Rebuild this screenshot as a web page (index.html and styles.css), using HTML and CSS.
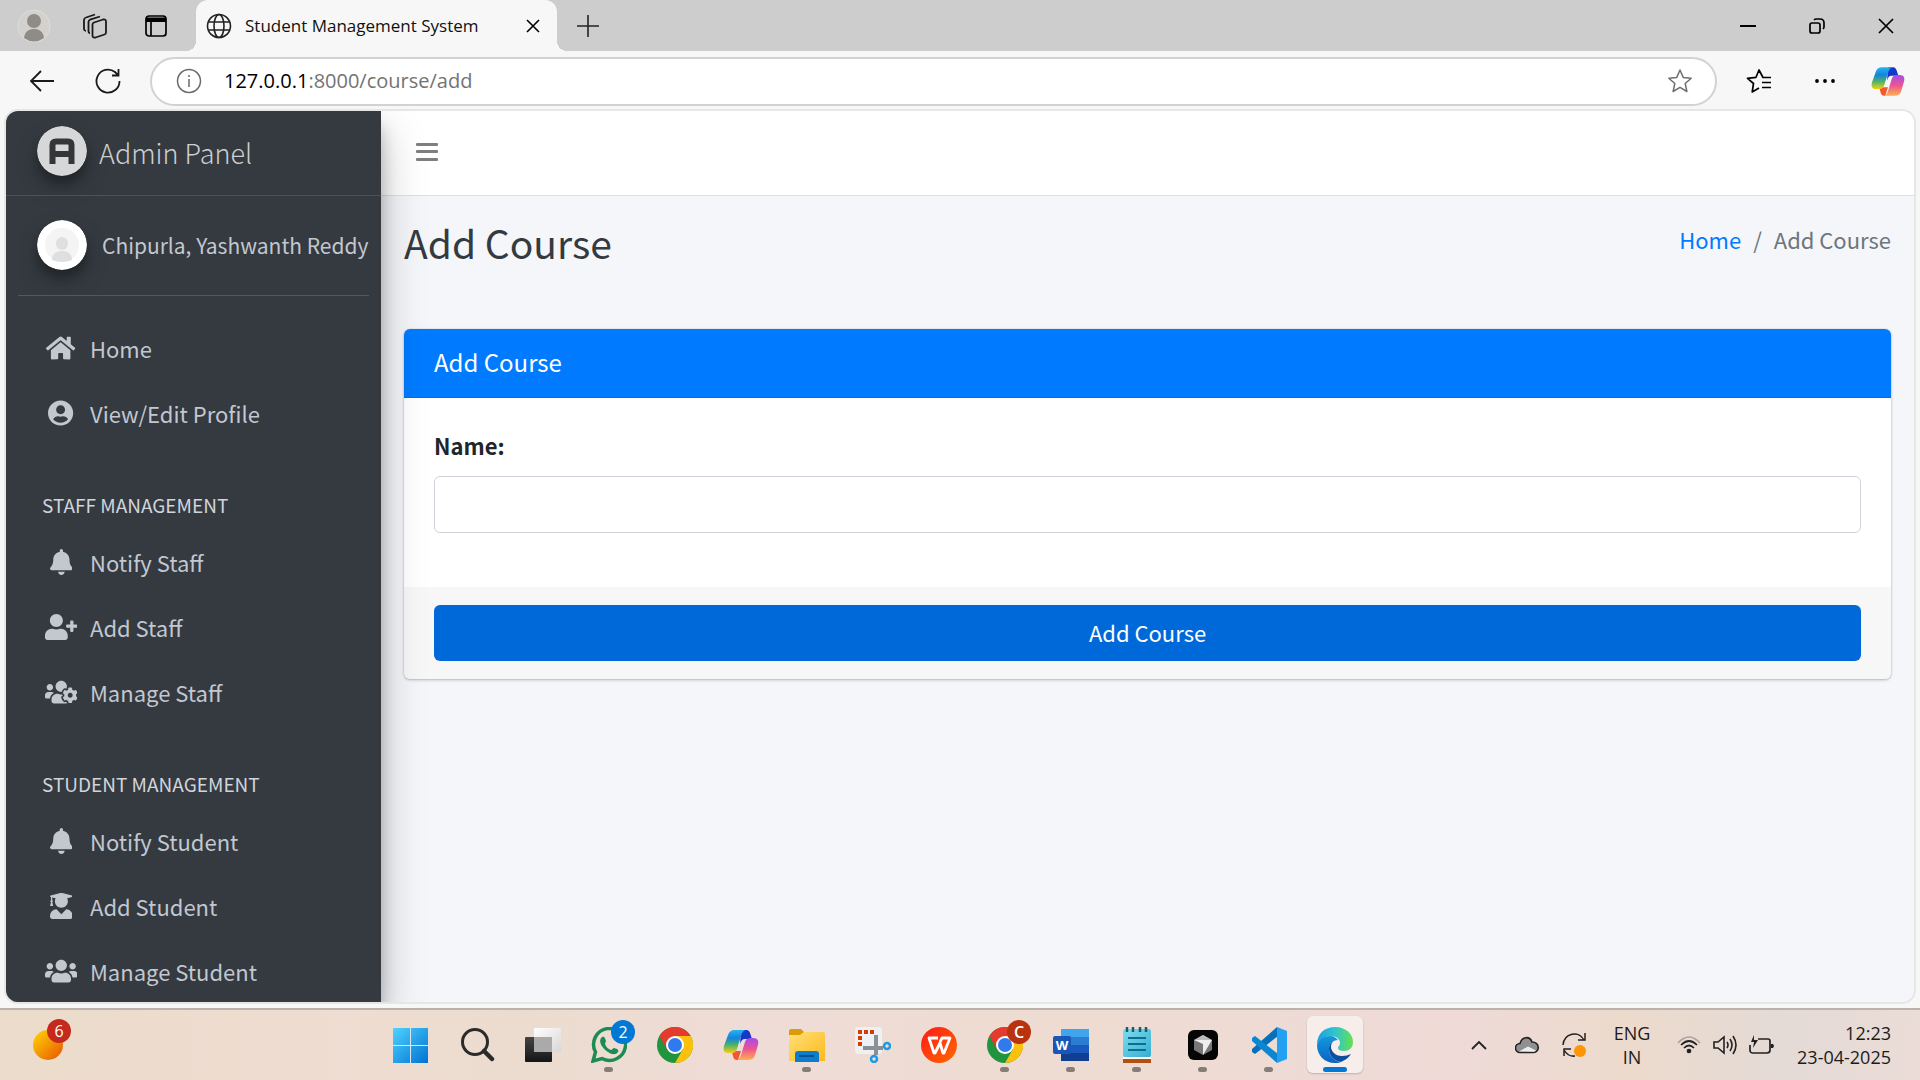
FILE: index.html
```html
<!DOCTYPE html>
<html lang="en">
<head>
<meta charset="utf-8">
<meta name="viewport" content="width=device-width, initial-scale=1">
<title>Student Management System</title>
<link rel="stylesheet" href="styles.css">
</head>
<body>
<svg class="defs" width="0" height="0" aria-hidden="true">
  <defs>
    <linearGradient id="cp-a" x1="0" y1="0" x2="0" y2="1"><stop offset="0" stop-color="#22b4f2"/><stop offset=".35" stop-color="#1583dc"/><stop offset=".65" stop-color="#4cb26a"/><stop offset="1" stop-color="#f7cf12"/></linearGradient>
    <linearGradient id="cp-b" x1="0" y1="0" x2="0" y2="1"><stop offset="0" stop-color="#a24bf0"/><stop offset=".5" stop-color="#ee5490"/><stop offset="1" stop-color="#fdb04d"/></linearGradient>
    <linearGradient id="win" x1="0" y1="0" x2="1" y2="1"><stop offset="0" stop-color="#4fd3ff"/><stop offset="1" stop-color="#0072d2"/></linearGradient>
    <linearGradient id="sun" x1="0" y1="0" x2="1" y2="1"><stop offset=".1" stop-color="#ffcb00"/><stop offset="1" stop-color="#e65300"/></linearGradient>
    <linearGradient id="tvd" x1="0" y1="0" x2="0" y2="1"><stop offset="0" stop-color="#454545"/><stop offset="1" stop-color="#151515"/></linearGradient>
    <linearGradient id="tvl" x1="0" y1="0" x2="1" y2="1"><stop offset="0" stop-color="#fff"/><stop offset="1" stop-color="#d9d6d6"/></linearGradient>
    <linearGradient id="fold" x1="0" y1="0" x2="1" y2="1"><stop offset="0" stop-color="#ffe07a"/><stop offset="1" stop-color="#fcb91b"/></linearGradient>
    <linearGradient id="wps" x1="0" y1="0" x2="1" y2="1"><stop offset="0" stop-color="#ff1818"/><stop offset="1" stop-color="#ff6a00"/></linearGradient>
    <linearGradient id="note" x1="0" y1="0" x2="1" y2="1"><stop offset="0" stop-color="#7fdcf0"/><stop offset="1" stop-color="#35aed0"/></linearGradient>
    <linearGradient id="edge-t" x1="0" y1="0" x2="1" y2="0"><stop offset="0" stop-color="#1f9fe0"/><stop offset=".5" stop-color="#2fc4cf"/><stop offset="1" stop-color="#66e04e"/></linearGradient>
    <linearGradient id="edge-b" x1="0" y1="0" x2="0" y2="1"><stop offset="0" stop-color="#1399dd"/><stop offset="1" stop-color="#0a63c4"/></linearGradient>
    <symbol id="copilot" viewBox="0 0 36 32">
      <path fill="#1638c8" d="M18 1h5c3 0 4 2 5 6l1 3h-7c-3 0-4 2-5 5z"/>
      <path fill="#f4582e" d="M9 22h9l-3 9h-1c-3 0-4-2-5-9z"/>
      <path fill="url(#cp-a)" d="M12 1h10c-2 1-3 3-4 6l-4 13c-1 3-3 4-5 4H5c-4 0-5-3-4-7L5 6c1-3 3-5 7-5z"/>
      <path fill="url(#cp-b)" d="M27 9h3c5 0 6 3 5 7l-3 10c-1 4-4 5-7 5H14c2-1 3-2 4-5l4-13c1-3 3-4 5-4z"/>
    </symbol>
    <symbol id="chrome" viewBox="0 0 36 36">
      <circle cx="18" cy="18" r="18" fill="#20943f"/>
      <path fill="#e33b2e" d="M2.400 9A18 18 0 0 1 33.600 9H18L10.200 22.500z"/>
      <path fill="#fdc10d" d="M33.600 9A18 18 0 0 1 18 36L25.800 22.500 18 9z"/>
      <circle cx="18" cy="18" r="9" fill="#fff"/><circle cx="18" cy="18" r="7" fill="#2f7bee"/>
    </symbol>
    <symbol id="bell" viewBox="0 0 448 512"><path d="M224 512c35.320 0 63.970-28.650 63.970-64H160.030c0 35.350 28.650 64 63.970 64zm215.390-149.710c-19.320-20.760-55.470-51.990-55.470-154.290 0-77.700-54.480-139.900-127.940-155.160V32c0-17.670-14.320-32-31.980-32s-31.980 14.330-31.980 32v20.840C118.560 68.100 64.080 130.300 64.080 208c0 102.300-36.150 133.530-55.470 154.290-6 6.450-8.660 14.160-8.610 21.710.11 16.400 12.980 32 32.100 32h383.800c19.120 0 32-15.600 32.100-32 .05-7.550-2.610-15.270-8.610-21.710z"/></symbol>
  </defs>
</svg>

<header class="tabs">
  <button class="tab-tool" aria-label="Profile"><svg width="34" height="34" viewBox="0 0 34 34"><circle cx="17" cy="17" r="16" fill="#d3d1ce" stroke="#dedddb"/><circle cx="17" cy="12" r="7" fill="#8f8b87"/><path d="M7 29c1-7 5-9 10-9s9 2 10 9q-10 7-20 0z" fill="#8f8b87"/></svg></button>
  <button class="tab-tool" aria-label="Workspaces"><svg width="26" height="26" viewBox="0 0 26 26" fill="none" stroke="#1a1a1a" stroke-width="1.800"><path d="M10.500 11.500q0-1.500 1.500-2l9-3q3-.7 3 2v11q0 1.500-1.500 2l-9 3q-3 .7-3-2z"/><path d="M8 20q-1.500 0-1.500-2V9q0-1.500 1.500-2.300L18 3.500M4 18q-2-.5-2-2V7q0-2 2-2.500L13 1.500"/></svg></button>
  <button class="tab-tool" aria-label="Tab actions"><svg width="24" height="24" viewBox="0 0 24 24" fill="none" stroke="#000" stroke-width="1.700"><rect x="2" y="2" width="20" height="20" rx="3"/><path d="M2 5h20M2 6.500h20" stroke-width="3"/><path d="M7 8v14"/></svg></button>
  <div class="tab">
    <svg width="26" height="26" viewBox="0 0 26 26" fill="none" stroke="#222" stroke-width="1.600"><circle cx="13" cy="13" r="11.500"/><ellipse cx="13" cy="13" rx="5" ry="11.500"/><path d="M2.500 9h21M2.500 17h21"/></svg>
    <span class="tab-title">Student Management System</span>
    <button class="tab-close" aria-label="Close tab"><svg width="14" height="14" viewBox="0 0 14 14" fill="none" stroke="#000" stroke-width="1.600"><path d="M1 1l12 12M13 1L1 13"/></svg></button>
  </div>
  <button class="new-tab" aria-label="New tab"><svg width="22" height="22" viewBox="0 0 22 22" fill="none" stroke="#222" stroke-width="1.600"><path d="M11 0v22M0 11h22"/></svg></button>
  <div class="window-buttons">
    <button aria-label="Minimize"><svg width="16" height="16" viewBox="0 0 16 16" stroke="#000" stroke-width="2"><path d="M0 8h16"/></svg></button>
    <button aria-label="Restore"><svg width="16" height="16" viewBox="0 0 16 16" fill="none" stroke="#000" stroke-width="1.700"><rect x="1" y="5" width="10" height="10" rx="2"/><path d="M5 2q1-1 2-1h4q4 0 4 4v4q0 1-1 2"/></svg></button>
    <button aria-label="Close"><svg width="16" height="16" viewBox="0 0 16 16" fill="none" stroke="#000" stroke-width="1.700"><path d="M1 1l14 14M15 1L1 15"/></svg></button>
  </div>
</header>

<div class="toolbar">
  <button class="nav-btn" aria-label="Back"><svg width="26" height="24" viewBox="0 0 26 24" fill="none" stroke="#1a1a1a" stroke-width="1.800"><path d="M25 12H2M12 2L2 12l10 10"/></svg></button>
  <button class="nav-btn" aria-label="Refresh"><svg width="26" height="26" viewBox="0 0 26 26" fill="none" stroke="#1a1a1a" stroke-width="1.800"><path d="M24.500 13A11.500 11.500 0 1 1 20 4l3 3M23.500 1v6.500H17"/></svg></button>
  <div class="address">
    <svg width="26" height="26" viewBox="0 0 26 26" fill="none" stroke="#6a6a6a" stroke-width="1.500"><circle cx="13" cy="13" r="11.500"/><path d="M13 11v8M13 7v2"/></svg>
    <p class="url"><b>127.0.0.1</b>:8000/course/add</p>
    <button aria-label="Favourite"><svg width="26" height="26" viewBox="0 0 26 26" fill="none" stroke="#6f6f6f" stroke-width="1.500" stroke-linejoin="round"><path d="M13 2l3.200 7.400 8 .8-6 5.300 1.700 8L13 19.300 6.100 23.500l1.700-8-6-5.300 8-.8z"/></svg></button>
  </div>
  <button class="tool" aria-label="Favourites"><svg width="26" height="26" viewBox="0 0 26 26" fill="none" stroke="#000" stroke-width="1.700" stroke-linejoin="round"><path d="M25 9.500h-8L13 2 10 9.300l-8.500 1 6 5.200-1.300 8.500L13 20M16 14.500h9M16 19.500h9"/></svg></button>
  <button class="tool" aria-label="Settings and more"><svg width="22" height="6" viewBox="0 0 22 6"><circle cx="3" cy="3" r="1.900"/><circle cx="11" cy="3" r="1.900"/><circle cx="19" cy="3" r="1.900"/></svg></button>
  <button class="tool copilot" aria-label="Copilot"><svg width="34" height="31"><use href="#copilot"/></svg></button>
</div>

<div class="page">
  <aside class="sidebar">
    <a class="brand" href="#">
      <svg class="disc" width="50" height="50" viewBox="0 0 50 50"><circle cx="25" cy="25" r="25" fill="#d6d7d8"/><path d="M15.500 38V19q0-3.500 3.500-3.500h12q3.500 0 3.500 3.500v19M15.500 28h19" fill="none" stroke="#343637" stroke-width="6"/></svg>
      <span>Admin Panel</span>
    </a>
    <div class="side-scroll">
      <div class="user">
        <svg class="disc" width="50" height="50" viewBox="0 0 50 50"><circle cx="25" cy="25" r="25" fill="#fff"/><circle cx="25" cy="25" r="17" fill="#f4f4f4"/><rect x="19" y="17" width="12" height="13" rx="6" fill="#dedfe0"/><path d="M15 40c0-6 4-9 10-9s10 3 10 9q-10 4-20 0z" fill="#dedfe0"/></svg>
        <a href="#">Chipurla, Yashwanth Reddy</a>
      </div>
      <nav>
        <a class="item" href="#"><span class="ico"><svg viewBox="0 0 576 512"><path d="M280.370 148.260L96 300.110V464a16 16 0 0 0 16 16l112.060-.29a16 16 0 0 0 15.920-16V368a16 16 0 0 1 16-16h64a16 16 0 0 1 16 16v95.640a16 16 0 0 0 16 16.050L464 480a16 16 0 0 0 16-16V300L295.670 148.260a12.190 12.190 0 0 0-15.300 0zM571.600 251.470L488 182.560V44.050a12 12 0 0 0-12-12h-56a12 12 0 0 0-12 12v72.610L318.470 43a48 48 0 0 0-61 0L4.340 251.470a12 12 0 0 0-1.600 16.900l25.500 31A12 12 0 0 0 45.150 301l235.220-193.740a12.190 12.190 0 0 1 15.300 0L530.900 301a12 12 0 0 0 16.900-1.600l25.500-31a12 12 0 0 0-1.700-16.930z"/></svg></span>Home</a>
        <a class="item" href="#"><span class="ico"><svg viewBox="0 0 496 512"><path d="M248 8C111 8 0 119 0 256s111 248 248 248 248-111 248-248S385 8 248 8zm0 96c48.600 0 88 39.400 88 88s-39.400 88-88 88-88-39.400-88-88 39.400-88 88-88zm0 344c-58.700 0-111.300-26.600-146.500-68.200 18.800-35.400 55.600-59.800 98.500-59.800 2.400 0 4.800.4 7.100 1.100 13 4.200 26.600 6.900 40.900 6.900 14.300 0 28-2.700 40.900-6.900 2.300-.7 4.700-1.100 7.100-1.100 42.900 0 79.700 24.400 98.500 59.800C359.300 421.400 306.700 448 248 448z"/></svg></span>View/Edit Profile</a>
        <h2>STAFF MANAGEMENT</h2>
        <a class="item" href="#"><span class="ico"><svg viewBox="0 0 448 512"><use href="#bell"/></svg></span>Notify Staff</a>
        <a class="item" href="#"><span class="ico"><svg viewBox="0 0 640 512"><path d="M624 208h-64v-64c0-8.800-7.200-16-16-16h-32c-8.800 0-16 7.200-16 16v64h-64c-8.800 0-16 7.200-16 16v32c0 8.800 7.200 16 16 16h64v64c0 8.800 7.200 16 16 16h32c8.800 0 16-7.200 16-16v-64h64c8.800 0 16-7.200 16-16v-32c0-8.800-7.200-16-16-16zm-400 48c70.700 0 128-57.300 128-128S294.700 0 224 0 96 57.300 96 128s57.300 128 128 128zm89.600 32h-16.700c-22.200 10.200-46.900 16-72.900 16s-50.600-5.800-72.900-16h-16.700C60.200 288 0 348.200 0 422.400V464c0 26.500 21.500 48 48 48h352c26.500 0 48-21.500 48-48v-41.600c0-74.200-60.200-134.400-134.400-134.400z"/></svg></span>Add Staff</a>
        <a class="item" href="#"><span class="ico"><svg viewBox="0 0 640 512"><path d="M610.500 341.300c2.600-14.100 2.600-28.500 0-42.600l25.800-14.900c3-1.700 4.300-5.200 3.300-8.500-6.700-21.600-18.200-41.200-33.200-57.400-2.300-2.500-6-3.100-9-1.400l-25.800 14.900c-10.900-9.300-23.400-16.500-36.900-21.300v-29.800c0-3.400-2.400-6.400-5.700-7.100-22.300-5-45-4.800-66.200 0-3.300.7-5.700 3.700-5.700 7.100v29.800c-13.500 4.800-26 12-36.900 21.300l-25.800-14.900c-2.900-1.700-6.700-1.100-9 1.400-15 16.200-26.500 35.800-33.200 57.400-1 3.300.4 6.800 3.300 8.500l25.800 14.900c-2.600 14.100-2.600 28.500 0 42.600l-25.800 14.900c-3 1.700-4.300 5.200-3.300 8.500 6.700 21.600 18.200 41.100 33.200 57.400 2.300 2.500 6 3.100 9 1.400l25.800-14.900c10.900 9.300 23.400 16.500 36.900 21.300v29.800c0 3.400 2.400 6.400 5.700 7.100 22.300 5 45 4.800 66.200 0 3.300-.7 5.700-3.700 5.700-7.100v-29.800c13.500-4.800 26-12 36.900-21.300l25.800 14.900c2.900 1.700 6.700 1.100 9-1.400 15-16.200 26.500-35.800 33.200-57.400 1-3.300-.4-6.800-3.300-8.500l-25.800-14.900zM496 368.500c-26.800 0-48.500-21.800-48.500-48.500s21.800-48.500 48.500-48.500 48.500 21.800 48.500 48.500-21.700 48.500-48.500 48.500zM96 224c35.300 0 64-28.700 64-64s-28.700-64-64-64-64 28.700-64 64 28.700 64 64 64zm224 32c1.900 0 3.700-.5 5.600-.6 8.300-21.700 20.500-42.100 36.300-59.200 7.400-8 17.900-12.600 28.900-12.600 6.900 0 13.700 1.800 19.600 5.300l7.900 4.600c.8-.5 1.600-.9 2.400-1.400 7-14.600 11.200-30.800 11.200-48 0-61.900-50.100-112-112-112S208 82.100 208 144c0 61.900 50.100 112 112 112zm105.200 194.500c-2.300-1.200-4.600-2.600-6.800-3.900-8.200 4.800-15.300 9.800-27.500 9.800-10.900 0-21.400-4.600-28.900-12.600-18.300-19.800-32.300-43.900-40.200-69.600-10.700-34.500 24.900-49.700 25.800-50.300-.1-2.600-.1-5.200 0-7.800l-7.900-4.600c-3.800-2.200-7-5-9.800-8.100-3.300.2-6.500.6-9.800.6-24.600 0-47.600-6-68.500-16h-8.300C179.600 288 128 339.600 128 403.200V432c0 26.500 21.500 48 48 48h255.400c-3.700-6-6.200-12.800-6.200-20.300v-9.200zM173.100 274.600C161.500 263.100 145.600 256 128 256H64c-35.300 0-64 28.700-64 64v32c0 17.700 14.300 32 32 32h65.900c6.300-47.400 34.900-87.300 75.200-109.400z"/></svg></span>Manage Staff</a>
        <h2>STUDENT MANAGEMENT</h2>
        <a class="item" href="#"><span class="ico"><svg viewBox="0 0 448 512"><use href="#bell"/></svg></span>Notify Student</a>
        <a class="item" href="#"><span class="ico"><svg viewBox="0 0 448 512"><path d="M319.400 320.600L224 416l-95.400-95.400C57.100 323.700 0 382.200 0 454.400v9.600c0 26.500 21.500 48 48 48h352c26.500 0 48-21.500 48-48v-9.600c0-72.200-57.100-130.700-128.600-133.800zM13.600 79.800l6.400 1.500v58.400c-7 4.200-12 11.500-12 20.300 0 8.400 4.600 15.400 11.100 19.700L3.500 242c-1.700 6.900 2.100 14 7.600 14h41.800c5.500 0 9.300-7.100 7.600-14l-15.600-62.300C51.400 175.400 56 168.400 56 160c0-8.800-5-16.100-12-20.300V87.100l66 15.900c-8.600 17.200-14 36.400-14 57 0 70.700 57.300 128 128 128s128-57.300 128-128c0-20.600-5.300-39.800-14-57l96.300-23.200c18.200-4.400 18.200-27.100 0-31.500l-190.400-46c-13-3.100-26.700-3.100-39.700 0L13.600 48.200c-18.100 4.400-18.100 27.200 0 31.600z"/></svg></span>Add Student</a>
        <a class="item" href="#"><span class="ico"><svg viewBox="0 0 640 512"><path d="M96 224c35.300 0 64-28.700 64-64s-28.700-64-64-64-64 28.700-64 64 28.700 64 64 64zm448 0c35.300 0 64-28.700 64-64s-28.700-64-64-64-64 28.700-64 64 28.700 64 64 64zm32 32h-64c-17.600 0-33.500 7.100-45.100 18.600 40.300 22.100 68.900 62 75.100 109.400h66c17.700 0 32-14.300 32-32v-32c0-35.300-28.700-64-64-64zm-256 0c61.900 0 112-50.100 112-112S381.900 32 320 32 208 82.100 208 144s50.100 112 112 112zm76.800 32h-8.300c-20.800 10-43.900 16-68.500 16s-47.600-6-68.500-16h-8.300C179.600 288 128 339.600 128 403.200V432c0 26.500 21.500 48 48 48h288c26.500 0 48-21.500 48-48v-28.800c0-63.600-51.600-115.200-115.200-115.200zm-223.700-13.400C161.500 263.100 145.600 256 128 256H64c-35.300 0-64 28.700-64 64v32c0 17.700 14.300 32 32 32h65.900c6.300-47.400 34.900-87.300 75.200-109.400z"/></svg></span>Manage Student</a>
      </nav>
    </div>
  </aside>

  <main class="main">
    <div class="navbar">
      <button aria-label="Toggle menu"><svg width="22" height="20" viewBox="0 0 22 20" fill="#7f7f7f"><rect y="1" width="22" height="3" rx="1"/><rect y="8" width="22" height="3" rx="1"/><rect y="16" width="22" height="3" rx="1"/></svg></button>
    </div>
    <div class="content">
      <div class="content-head">
        <h1>Add Course</h1>
        <ol class="crumbs"><li><a href="#">Home</a></li><li>Add Course</li></ol>
      </div>
      <form class="card">
        <h3 class="card-head">Add Course</h3>
        <div class="card-body">
          <label for="name">Name:</label>
          <input id="name" type="text">
        </div>
        <div class="card-foot"><button type="button">Add Course</button></div>
      </form>
    </div>
  </main>
</div>

<footer class="taskbar">
  <div class="widget">
    <div class="app-icon"><svg width="30" height="30"><circle cx="15" cy="15" r="15" fill="url(#sun)"/></svg><span class="badge red">6</span></div>
  </div>
  <div class="apps">
    <button class="app" aria-label="Start"><svg width="36" height="36" viewBox="0 0 36 36" fill="url(#win)"><path d="M0 1h17v17H0zM18 1h17v17H18zM0 19h17v17H0zM18 19h17v17H18z"/><path d="M17.500 1v35M0 18.500h35" stroke="#d7e8f4"/></svg></button>
    <button class="app" aria-label="Search"><svg width="36" height="36" viewBox="0 0 36 36" fill="none" stroke="#2b2b2b"><circle cx="16" cy="15" r="12.500" stroke-width="3"/><path d="M25 24l8 8" stroke-width="4.500" stroke-linecap="round"/></svg></button>
    <button class="app" aria-label="Task view"><svg width="36" height="36" viewBox="0 0 36 36"><rect x="0" y="10" width="27" height="25" rx="1" fill="url(#tvd)"/><rect x="9" y="1" width="27" height="24" rx="1" fill="url(#tvl)"/><path d="M9 10h18v15H9z" fill="#aaa"/></svg></button>
    <button class="app run" aria-label="WhatsApp"><span class="app-icon"><svg width="36" height="36" viewBox="0 0 36 36"><path d="M2 34l2.500-9A16 16 0 1 1 11 31.500z" fill="none" stroke="#1c8c54" stroke-width="3.500"/><path d="M11 10c2-1 3 0 4 4 0 1-1 2-1 3 1 3 3 5 6 6 1 0 2-2 3-2 4 1 5 2 4 4-2 3-6 3-10 0-5-3-11-11-6-15z" fill="#1c8c54"/></svg><span class="badge blue">2</span></span></button>
    <button class="app" aria-label="Chrome"><svg width="36" height="36"><use href="#chrome"/></svg></button>
    <button class="app" aria-label="Copilot"><svg width="36" height="34"><use href="#copilot"/></svg></button>
    <button class="app run" aria-label="File Explorer"><svg width="36" height="36" viewBox="0 0 36 36"><path d="M0 4q0-2 2-2h10l4 4v4H0z" fill="#dc9b0b"/><path d="M0 8h11l4-3h19q2 0 2 2v27H0z" fill="url(#fold)"/><path d="M6 35V27q0-3 3-3h18q3 0 3 3v8z" fill="#0c7ccc"/><path d="M10 29h15" stroke="#084f91" stroke-width="2"/></svg></button>
    <button class="app" aria-label="Snipping Tool"><svg width="36" height="36" viewBox="0 0 36 36"><rect x="0" y="0" width="27" height="27" rx="3" fill="#eef1f4"/><path d="M5 19V5h15" fill="none" stroke="#d83b01" stroke-width="4" stroke-dasharray="4 2"/><path d="M21 8v20M8 21h20" stroke="#8b8f96" stroke-width="4"/><g fill="none" stroke="#1a9be6" stroke-width="2.500"><circle cx="19" cy="32" r="3"/><circle cx="32" cy="19" r="3"/></g></svg></button>
    <button class="app" aria-label="WPS Office"><svg width="36" height="36" viewBox="0 0 36 36"><circle cx="18" cy="18" r="18" fill="url(#wps)"/><path d="M17 11H8l5 15h1l5-10 3 10h1l6-15h-8l-2 4" fill="none" stroke="#fff" stroke-width="2.800" stroke-linejoin="round"/></svg></button>
    <button class="app run" aria-label="Chrome profile"><span class="app-icon"><svg width="36" height="36"><use href="#chrome"/></svg><span class="badge rust">C</span></span></button>
    <button class="app run" aria-label="Word"><span class="app-icon"><svg width="36" height="36" viewBox="0 0 36 36"><path d="M8 2h28v8H8z" fill="#41a5ee"/><path d="M8 10h28v8H8z" fill="#2b7cd3"/><path d="M8 18h28v8H8z" fill="#185abd"/><path d="M8 26h28v8H8z" fill="#103f91"/><rect y="9" width="18" height="18" rx="2" fill="#1857b8"/></svg><span class="word-mark">W</span></span></button>
    <button class="app run" aria-label="Notepad"><svg width="36" height="36" viewBox="0 0 36 36"><path d="M4 32h28v4H4z" fill="#b4500f"/><path d="M4 30h28v2H4z" fill="#fff"/><rect x="4" y="2" width="28" height="28" rx="2" fill="url(#note)"/><path d="M9 11h18M9 17h18M9 23h18" stroke="#0b6f8e" stroke-width="2"/><path d="M8 0v5M14 0v5M21 0v5M27 0v5" stroke="#135e75" stroke-width="2.500"/></svg></button>
    <button class="app run" aria-label="Cursor"><svg width="36" height="36" viewBox="0 0 36 36"><rect x="3" y="3" width="30" height="30" rx="6" fill="#050505"/><path d="M18 8l9 5v10l-9 5-9-5V13z" fill="#777"/><path d="M9 13h18l-9 15v-11z" fill="#eee"/><path d="M18 8l9 5H9z" fill="#bbb"/></svg></button>
    <button class="app run" aria-label="Visual Studio Code"><svg width="36" height="36" viewBox="0 0 36 36"><path d="M26 0L1 22v3l3 2L27 9z" fill="#0870b8"/><path d="M26 36L1 14v-3l3-2 23 18z" fill="#0b86d1"/><path d="M26 0l10 4v28l-10 4z" fill="#22a0f2"/></svg></button>
    <button class="app run active" aria-label="Edge"><svg width="36" height="36" viewBox="0 0 36 36"><path d="M0 18C0 6 8 0 18 0c11 0 18 7 18 15 0 6-4 9-9 9-4 0-6-1-6-3s2-2 2-5c0-4-4-7-9-7C7 9 2 13 0 18z" fill="url(#edge-t)"/><path d="M0 18C2 12 7 9 13 9c4 0 6 2 8 4-5 0-9 4-9 9 0 6 4 12 12 13-2 1-4 1-6 1C7 36 0 28 0 18z" fill="url(#edge-b)"/><path d="M17 14c-4 2-5 5-5 8 0 7 5 12 12 13 5-2 8-5 10-8-3 1-5 2-9 2-7 0-11-5-11-9 0-3 1-5 3-6z" fill="#0d4f9e"/></svg></button>
  </div>
  <div class="tray">
    <svg class="chevron" width="16" height="10" viewBox="0 0 16 10" fill="none" stroke="#222" stroke-width="1.800"><path d="M1 9l7-7 7 7"/></svg>
    <svg class="cloud" width="24" height="18" viewBox="0 0 24 18"><path d="M5 16.500a4.500 4.500 0 0 1 0-9C7 0 15 0 17 6c8 0 8 10.500 1.500 10.500z" fill="#909090" stroke="#222" stroke-width="1.600"/><path d="M4 15.500l9-5 8 4q-1 1.200-2.500 1.200z" fill="#eee"/></svg>
    <svg width="24" height="26" viewBox="0 0 24 26" fill="none" stroke="#222" stroke-width="1.500"><path d="M1 13C2 1 17-2 22 8M23 1v7h-7M2 24v-7h7M2 18q4 7 11 6"/><circle cx="18" cy="19" r="6" fill="#ff9500" stroke="none"/></svg>
    <span class="lang">ENG<br>IN</span>
    <svg width="24" height="18" viewBox="0 0 24 18" fill="none" stroke="#222" stroke-width="1.700"><path d="M1 7Q12-5 23 7" stroke="#aaa2a0"/><path d="M4 9q8-8 16 0M7 12q5-5 10 0"/><circle cx="12" cy="15" r="1.500" fill="#222"/></svg>
    <svg width="24" height="22" viewBox="0 0 24 22" fill="none" stroke="#222" stroke-width="1.600"><path d="M1 8h4l6-5v16l-6-5H1zM14 8q2 3 0 6M17 5q4 6 0 12M20 2q6 9 0 18"/></svg>
    <svg width="25" height="22" viewBox="0 0 25 22" fill="none" stroke="#222" stroke-width="1.700"><path d="M9 5h10q2 0 2 2v9q0 3-3 3H4q-3 0-3-3v-5M22 12h3" /><path d="M5 1L2 8h3l-1 6 5-8H5z" fill="#222" stroke="none"/><path d="M23 10v4" stroke-width="2.500"/></svg>
    <time class="clock">12:23<br>23-04-2025</time>
  </div>
</footer>
</body>
</html>
```
FILE: styles.css
```css
* { box-sizing: border-box; margin: 0; padding: 0; }
body {
  height: 100vh;
  display: flex;
  flex-direction: column;
  background: #f7f7f7;
  font-family: "Noto Sans CJK SC", sans-serif;
  font-size: 22px;
  line-height: 36px;
  color: #212529;
}
button { border: 0; background: none; font: inherit; color: inherit; display: flex; align-items: center; justify-content: center; }
a { color: inherit; text-decoration: none; }
svg { display: block; flex: none; }
.defs { position: absolute; }

/* Browser tab strip */
.tabs { flex: none; height: 51px; display: flex; align-items: center; background: #cdcdcd; padding-left: 3px; font-family: "Open Sans", sans-serif; font-size: 17px; }
.tab-tool { width: 61px; height: 51px; }
.tab { position: relative; width: 361px; height: 51px; margin-left: 10px; padding: 0 17px 0 10px; display: flex; align-items: center; gap: 13px; background: #f7f7f7; border-radius: 12px 12px 0 0; color: #111; }
.tab::before, .tab::after { content: ""; position: absolute; bottom: 0; width: 10px; height: 10px; }
.tab::before { left: -10px; background: radial-gradient(circle at 0 0, transparent 10px, #f7f7f7 10px); }
.tab::after { right: -10px; background: radial-gradient(circle at 100% 0, transparent 10px, #f7f7f7 10px); }
.tab-title { flex: 1; white-space: nowrap; }
.new-tab { margin-left: 20px; }
.window-buttons { margin-left: auto; display: flex; }
.window-buttons button { width: 69px; height: 51px; }

/* Address row */
.toolbar { flex: none; height: 60px; display: flex; align-items: center; padding: 0 2px 0 9px; }
.nav-btn { width: 66px; height: 48px; }
.address { flex: 1; height: 49px; margin: 0 9px; padding: 0 22px 0 24px; display: flex; align-items: center; gap: 22px; background: #fff; border: 2px solid #d2d2d2; border-radius: 25px; font-family: "Open Sans", sans-serif; font-size: 20px; color: #737373; }
.url { flex: 1; }
.url b { font-weight: 400; color: #000; }
.tool { width: 66px; height: 48px; }
.copilot { width: 60px; }

/* Web page */
.page { flex: 1; min-height: 0; display: flex; margin: 0 6px 6px; border-radius: 12px; overflow: hidden; background: #f4f6f9; box-shadow: 0 0 0 2px #e6e6e6; }
.sidebar { width: 375px; flex: none; position: relative; z-index: 1; background: #343a40; color: #c2c7d0; box-shadow: 0 21px 42px rgba(0,0,0,.25), 0 15px 15px rgba(0,0,0,.22); }
.disc { border-radius: 50%; box-shadow: 0 12px 24px rgba(0,0,0,.19), 0 8px 8px rgba(0,0,0,.23); }
.brand { height: 85px; padding: 0 31px 4px; display: flex; align-items: center; gap: 12px; border-bottom: 1px solid #4b545c; font-size: 27px; font-weight: 300; color: #cdcecf; }
.brand span { padding-top: 4px; }
.side-scroll { padding: 0 12px; }
.user { height: 100px; padding: 0 0 2px 19px; display: flex; align-items: center; gap: 15px; border-bottom: 1px solid #4f5962; overflow: hidden; white-space: nowrap; font-size: 21px; }
nav { padding-top: 19px; }
.item { height: 65px; padding-left: 18px; display: flex; align-items: center; gap: 4px; }
.ico { width: 50px; display: flex; justify-content: center; }
.ico svg { height: 26px; fill: #c2c7d0; }
nav h2 { height: 84px; padding: 42px 0 0 24px; font-size: 19px; font-weight: 400; color: #d0d4db; }

.main { flex: 1; min-width: 0; }
.navbar { height: 85px; padding: 0 35px 2px; display: flex; align-items: center; background: #fff; border-bottom: 1px solid #dee2e6; }
.content { padding: 20px 23px; }
.content-head { display: flex; justify-content: space-between; align-items: flex-start; height: 113px; }
h1 { font-size: 39px; font-weight: 400; line-height: 52px; color: #343a40; }
.crumbs { display: flex; list-style: none; padding-top: 5px; color: #6c757d; }
.crumbs a { color: #007bff; }
.crumbs li + li::before { content: "/"; padding: 0 12px; }
.card { background: #fff; border-radius: 6px; box-shadow: 0 0 1px rgba(0,0,0,.3), 0 1px 3px rgba(0,0,0,.25); overflow: hidden; }
.card-head { height: 69px; padding: 15px 30px; background: #007bff; border-bottom: 1px solid #006fe6; color: #fff; font-size: 24px; font-weight: 400; }
.card-body { padding: 29px 30px 54px; }
.card-body label { display: block; margin-bottom: 13px; font-weight: 700; }
.card-body input { display: block; width: 100%; height: 57px; padding: 0 18px; border: 1px solid #ced4da; border-radius: 6px; font: inherit; background: #fff; }
.card-foot { padding: 18px 30px; background: #f7f7f7; }
.card-foot button { width: 100%; height: 56px; padding-bottom: 3px; background: #0069d9; border-radius: 6px; color: #fff; }

/* Desktop taskbar */
.taskbar { flex: none; height: 72px; display: flex; align-items: center; border-top: 2px solid #bdb1ab; background: linear-gradient(90deg, #ecdccb, #efdcd2 18%, #ecdccf 27%, #efdcd7 40%, #eedcd2 55%, #efdad7 76%, #ecdacd 85%, #e4dad6 93%, #ebdcd7); font-family: "Open Sans", sans-serif; color: #1b1b1b; }
.widget { width: 378px; padding: 0 33px; display: flex; }
.app-icon { position: relative; display: block; }
.badge { position: absolute; top: -7px; right: -8px; width: 24px; height: 24px; border-radius: 50%; color: #fff; font-size: 16px; line-height: 24px; text-align: center; }
.widget .badge { top: -11px; }
.red { background: #c42b1c; }
.blue { background: #0078d4; }
.rust { background: #b9330f; font-weight: 600; }
.word-mark { position: absolute; left: 0; top: 9px; width: 18px; color: #fff; font-size: 13px; font-weight: 700; line-height: 18px; text-align: center; }
.apps { display: flex; }
.app { position: relative; width: 66px; height: 70px; }
.run::after { content: ""; position: absolute; bottom: 8px; left: 28px; width: 9px; height: 5px; border-radius: 3px; background: #867c78; }
.active::before { content: ""; position: absolute; z-index: -1; inset: 6px 5px 7px; border-radius: 6px; background: #f7eeeb; box-shadow: 0 1px 2px rgba(0,0,0,.2); }
.active { isolation: isolate; }
.active::after { left: 21px; width: 24px; background: #0078d4; }
.tray { flex: 1; padding-right: 29px; display: flex; align-items: center; justify-content: flex-end; gap: 12px; font-size: 18px; line-height: 24px; }
.chevron { margin-right: 16px; }
.cloud { margin-right: 11px; }
.lang { width: 44px; margin: 0 11px 0 12px; text-align: center; }
.clock { width: 104px; margin-left: 1px; text-align: right; white-space: nowrap; }
```
